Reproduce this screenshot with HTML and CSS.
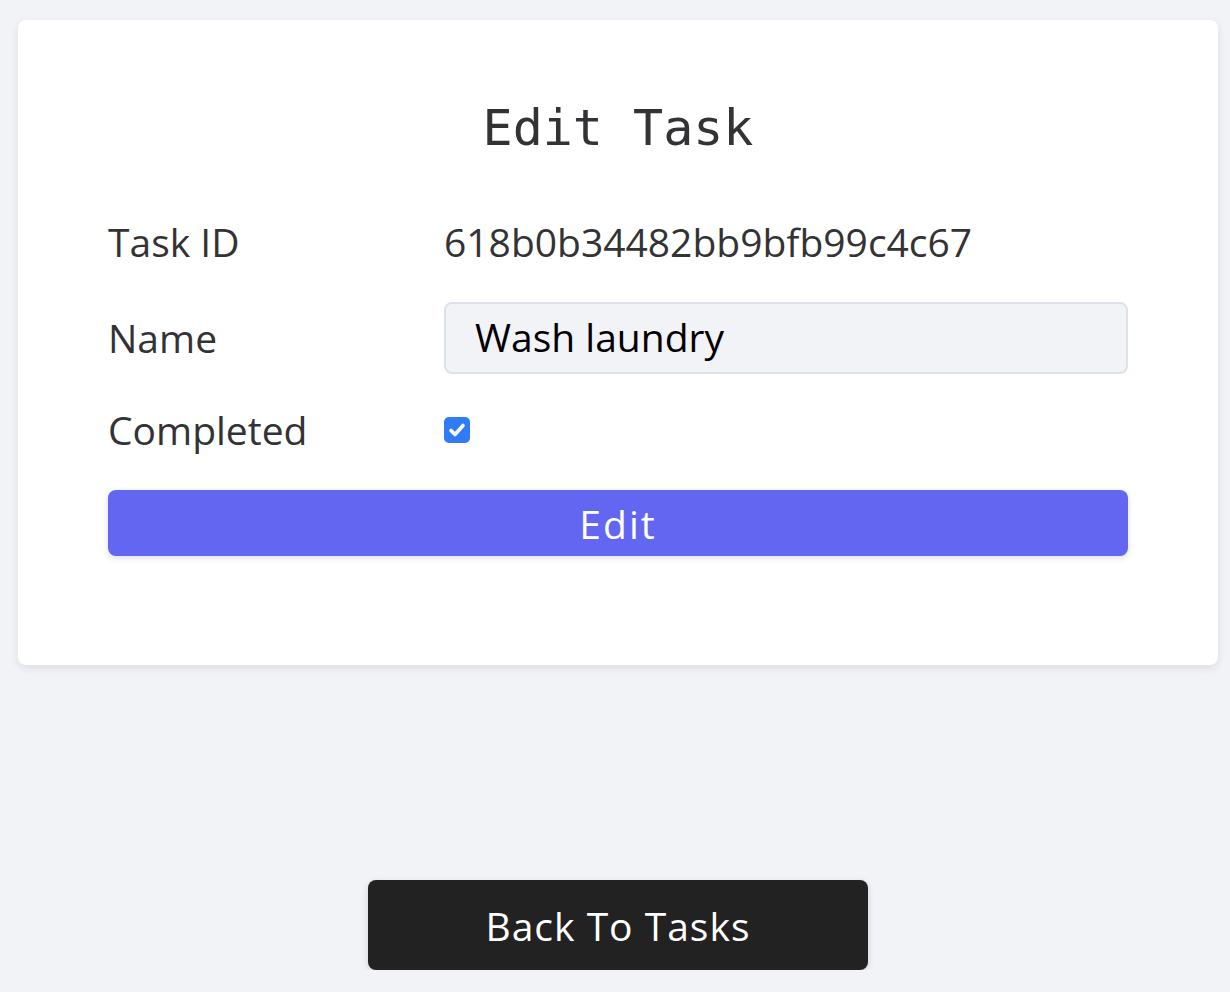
FILE: index.html
```html
<!DOCTYPE html>
<html lang="en">
<head>
<meta charset="utf-8">
<title>Edit Task</title>
<link rel="stylesheet" href="styles.css">
</head>
<body>
<main class="page">
  <section class="card">
    <h1 class="title">Edit Task</h1>
    <form class="form">
      <div class="row">
        <span class="label">Task ID</span>
        <span class="value">618b0b34482bb9bfb99c4c67</span>
      </div>
      <div class="row row-name">
        <label class="label" for="name">Name</label>
        <input class="input" id="name" type="text" value="Wash laundry">
      </div>
      <div class="row row-check">
        <label class="label" for="done">Completed</label>
        <span class="check">
          <svg viewBox="0 0 26 26" width="26" height="26" aria-hidden="true">
            <path d="M7 13.5 L11 17.5 L19 8.5" fill="none" stroke="#fff" stroke-width="3.6" stroke-linecap="round" stroke-linejoin="round"/>
          </svg>
        </span>
      </div>
      <button class="btn btn-edit" type="button">Edit</button>
    </form>
  </section>
  <div class="back-wrap">
    <a class="btn btn-back" href="#">Back To Tasks</a>
  </div>
</main>
</body>
</html>
```
FILE: styles.css
```css
* { box-sizing: border-box; }
html, body { margin: 0; padding: 0; }
body {
  background: #f2f3f7;
  font-family: "Open Sans", "Noto Sans", sans-serif;
  color: #333336;
}
.page {
  padding: 20px 12px 0 18px;
  display: flex;
  flex-direction: column;
}
.card {
  width: 1200px;
  background: #fff;
  border-radius: 8px;
  box-shadow: 0 3px 8px rgba(20, 30, 60, 0.10);
  padding: 80px 90px 109px;
}
.title {
  margin: 0 0 64px;
  text-align: center;
  font-family: "DejaVu Sans Mono", "Liberation Mono", monospace;
  font-weight: normal;
  font-size: 50px;
  line-height: 56px;
  letter-spacing: 0;
  color: #333336;
}
.form {
  display: flex;
  flex-direction: column;
}
.row {
  display: grid;
  grid-template-columns: 336px 1fr;
  align-items: center;
}
.label, .value {
  font-size: 39px;
  line-height: 44px;
}
.row-name { margin-top: 38px; }
.row-check { margin-top: 34px; }
.input {
  height: 72px;
  padding: 0 29px 3px;
  background: #f2f3f7;
  border: 2px solid #dde1ea;
  border-radius: 8px;
  font-family: inherit;
  font-size: 39px;
  color: #000;
  outline: none;
}
.check {
  width: 26px;
  height: 26px;
  border-radius: 5px;
  background: #2f7cf6;
  display: flex;
}
.btn {
  display: flex;
  align-items: center;
  justify-content: center;
  border: 0;
  border-radius: 8px;
  font-family: inherit;
  font-size: 39px;
  color: #fff;
  text-decoration: none;
  cursor: pointer;
}
.btn-edit {
  margin-top: 38px;
  height: 66px;
  width: 100%;
  background: #6366f1;
  box-shadow: 0 2px 6px rgba(60, 60, 120, 0.18);
  letter-spacing: 2px;
}
.back-wrap {
  display: flex;
  justify-content: center;
  margin-top: 215px;
}
.btn-back {
  width: 500px;
  height: 90px;
  background: #222;
  box-shadow: 0 2px 6px rgba(0, 0, 0, 0.15);
  letter-spacing: 1px;
}
```
